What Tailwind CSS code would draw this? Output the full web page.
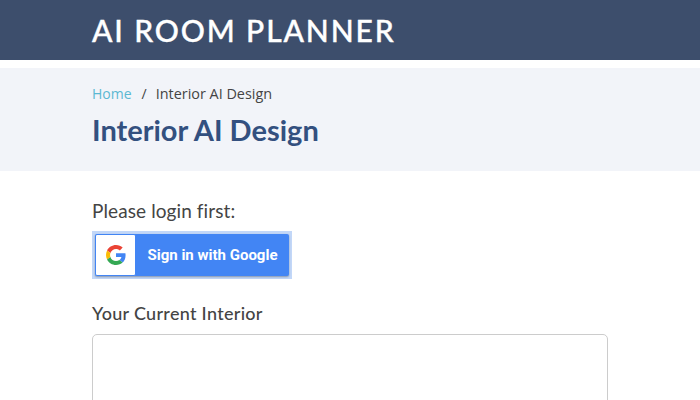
<!DOCTYPE html>
<html lang="en">
<head>
    <meta charset="UTF-8">
    <title>Interior AI Design</title>
    <script src="https://cdn.jsdelivr.net/npm/@tailwindcss/browser@4"></script>
</head>
<body class="bg-white h-[400px] overflow-hidden font-['Open_Sans',sans-serif]">
    <header class="bg-[#3d4e6c] h-[60px] px-[92px] flex items-center">
        <div class="text-white text-[30px] font-['Lato',sans-serif] font-medium tracking-[1.9px] [-webkit-text-stroke:0.4px_white]">AI ROOM PLANNER</div>
    </header>
    <section class="mt-2 bg-[#f2f4f9] h-[103px] px-[92px] pt-[16px]">
        <nav class="flex text-[14px] leading-[20px] text-[#444]">
            <a href="#" class="text-[#5bb8d2]">Home</a>
            <span class="ml-[10px] mr-[9px]">/</span>
            <span class="text-[14.4px]">Interior AI Design</span>
        </nav>
        <h1 class="mt-[8px] text-[29px] leading-[36px] font-['Lato',sans-serif] font-bold text-[#33507f]">Interior AI Design</h1>
    </section>
    <main class="px-[92px] pt-[28px]">
        <p class="text-[19px] leading-[24px] tracking-[0.1px] font-['Lato',sans-serif] text-[#444]">Please login first:</p>
        <button class="mt-[8px] flex w-[200px] h-[48px] p-[3px] bg-[#c2d7f8]">
            <span class="flex w-full h-full rounded-[2px] bg-[#4285f4] shadow-[0_1px_2px_rgba(0,0,0,0.3)] overflow-hidden">
                <span class="flex items-center justify-center w-[41px] h-full bg-white border border-[#4285f4] rounded-[2px]">
                    <svg width="20" height="20" viewBox="0 0 48 48">
                        <path fill="#EA4335" d="M24 9.5c3.54 0 6.71 1.22 9.21 3.6l6.85-6.85C35.9 2.38 30.47 0 24 0 14.62 0 6.51 5.38 2.56 13.22l7.98 6.19C12.43 13.72 17.74 9.5 24 9.5z"/>
                        <path fill="#4285F4" d="M46.98 24.55c0-1.57-.15-3.09-.38-4.55H24v9.02h12.94c-.58 2.96-2.26 5.48-4.78 7.18l7.73 6c4.51-4.18 7.09-10.36 7.09-17.65z"/>
                        <path fill="#FBBC05" d="M10.53 28.59c-.48-1.45-.76-2.99-.76-4.59s.27-3.14.76-4.59l-7.98-6.19C.92 16.46 0 20.12 0 24c0 3.88.92 7.54 2.56 10.78l7.97-6.19z"/>
                        <path fill="#34A853" d="M24 48c6.48 0 11.93-2.13 15.89-5.81l-7.73-6c-2.15 1.45-4.92 2.3-8.16 2.3-6.26 0-11.57-4.22-13.47-9.91l-7.98 6.19C6.51 42.62 14.62 48 24 48z"/>
                    </svg>
                </span>
                <span class="flex-1 flex items-center justify-center text-white text-[15px] font-bold font-['Roboto',sans-serif]">Sign in with Google</span>
            </span>
        </button>
        <label class="block mt-[22px] text-[18px] leading-[24px] tracking-[0.3px] font-['Lato',sans-serif] font-medium text-[#444]">Your Current Interior</label>
        <div class="mt-[9px] w-[516px] h-[120px] bg-white border border-[#ccc] rounded-[5px]"></div>
    </main>
</body>
</html>
